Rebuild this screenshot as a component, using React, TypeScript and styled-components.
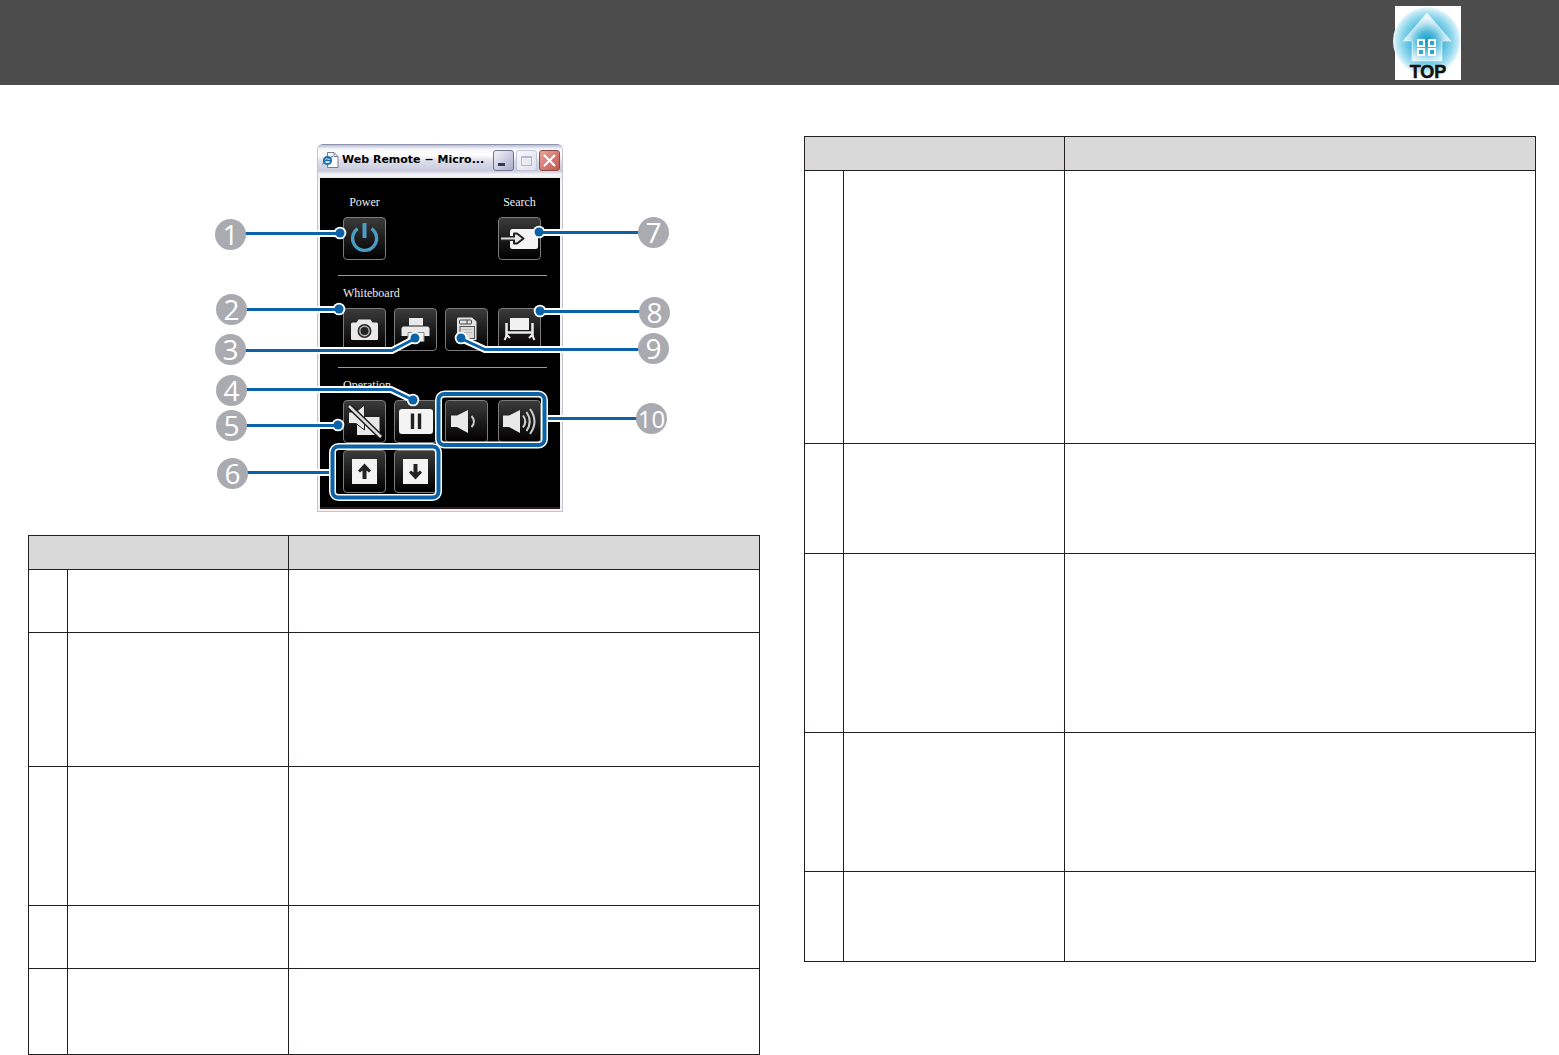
import React from 'react';
import styled, { createGlobalStyle } from 'styled-components';

const GlobalStyle = createGlobalStyle`
  *, *::before, *::after { box-sizing: border-box; }
  body {
    margin: 0;
    background: #fff;
    color: #231f20;
    font-family: "Liberation Sans", Arial, sans-serif;
  }
`;

const line = '#231f20';
const callout = '#0b62a6';

const TopBar = styled.header`
  display: flex;
  justify-content: flex-end;
  align-items: flex-start;
  height: 85px;
  padding: 6px 98px 0 0;
  background: #4c4c4c;
`;

const TopLink = styled.a`
  display: grid;
  width: 66px;
  height: 74px;
  background: #fff;
  color: #111;
  text-decoration: none;
  > * { grid-area: 1 / 1; }
`;

const TopText = styled.span`
  align-self: end;
  justify-self: center;
  font-size: 18px;
  line-height: 16px;
  font-weight: 700;
  -webkit-text-stroke: 0.5px #111;
`;

const HouseArt = styled.svg`
  display: block;
  overflow: visible;
`;

const Columns = styled.main`
  display: grid;
  grid-template-columns: 1fr 1fr;
  align-items: start;
  gap: 44px;
  padding: 0 23px 0 28px;
`;

const Column = styled.section<{ $top: number }>`
  padding-top: ${(p) => p.$top}px;
`;

const Table = styled.table`
  width: 100%;
  table-layout: fixed;
  border-collapse: separate;
  border-spacing: 0;
  border-top: 1px solid ${line};
  border-left: 1px solid ${line};
`;

const Col = styled.col<{ $width?: number }>`
  ${(p) => (p.$width ? `width: ${p.$width}px;` : '')}
`;

const Row = styled.tr<{ $height: number }>`
  height: ${(p) => p.$height}px;
`;

const HeadCell = styled.th`
  padding: 0;
  background: #d9d9d9;
  border-right: 1px solid ${line};
  border-bottom: 1px solid ${line};
`;

const Cell = styled.td`
  padding: 0;
  border-right: 1px solid ${line};
  border-bottom: 1px solid ${line};
`;

const Figure = styled.figure`
  position: relative;
  width: 455px;
  margin: 0 0 23px 187px;
  padding: 0 107px 0 102px;
`;

const Overlay = styled.svg`
  position: absolute;
  inset: 0;
  width: 100%;
  height: 100%;
  pointer-events: none;
`;

const Badge = styled.span<{ $x: number; $y: number; $wide: boolean }>`
  position: absolute;
  left: ${(p) => p.$x}px;
  top: ${(p) => p.$y}px;
  display: flex;
  align-items: center;
  justify-content: center;
  width: 31px;
  height: 31px;
  border-radius: 50%;
  background: #a9abb0;
  color: #fff;
  font-family: ${(p) => (p.$wide ? '"Liberation Sans Narrow", ' : '')}"Open Sans", sans-serif;
  font-size: ${(p) => (p.$wide ? 24 : 28)}px;
  line-height: 31px;
`;

const Window = styled.div`
  padding: 0 2px 2px;
  border: 1px solid #c4c4ca;
  border-top-color: #8d93ad;
  border-radius: 6px 6px 0 0;
  background: #f4f2f2;
`;

const TitleBar = styled.div`
  display: flex;
  align-items: center;
  gap: 3px;
  height: 33px;
  margin: 0 -2px;
  padding: 0 2px 3px 4px;
  border-radius: 5px 5px 0 0;
  background: linear-gradient(#b9bdd4 0, #f6f7fb 12%, #ffffff 30%, #dcdde9 50%, #c9cbdc 78%, #f6f6fa 90%, #e8e8ee 100%);
`;

const WindowTitle = styled.span`
  flex: 1;
  color: #000;
  font: 700 11px/16px "DejaVu Sans", sans-serif;
  white-space: nowrap;
`;

const WindowButtons = styled.div`
  display: flex;
  gap: 2px;
`;

const WindowButton = styled.button<{ $kind: 'min' | 'max' | 'close' }>`
  display: flex;
  width: 21px;
  height: 21px;
  padding: 0;
  border: 1px solid ${(p) => ({ min: '#6d7391', max: '#c3c6d6', close: '#8a4a4a' })[p.$kind]};
  border-radius: 3px;
  background: ${(p) =>
    ({
      min: 'linear-gradient(135deg, #f3f4fa, #a9adc8)',
      max: 'linear-gradient(135deg, #f8f8fc, #dfe0eb)',
      close: 'linear-gradient(135deg, #e9a49a, #c0574e)',
    })[p.$kind]};
`;

const Screen = styled.div`
  padding: 0 13px 0 18px;
  background: #000;
  border-bottom: 2px solid #2c1a1c;
  color: #eee;
`;

const Group = styled.div<{ $top: number; $bottom: number }>`
  display: flex;
  flex-direction: column;
  gap: 8px;
  padding: ${(p) => p.$top}px 6px ${(p) => p.$bottom}px 5px;
  & + & { border-top: 1px solid #9a9a9a; }
`;

const Label = styled.span`
  font: 12px/14px "Liberation Serif", "Times New Roman", serif;
`;

const Spread = styled.div`
  display: flex;
  justify-content: space-between;
`;

const Labelled = styled.label`
  display: flex;
  flex-direction: column;
  align-items: center;
  gap: 8px;
  width: 43px;
`;

const KeyGrid = styled.div`
  display: grid;
  grid-template-columns: 43px 43px 45px 43px;
  gap: 7px 8px;
`;

const Key = styled.button`
  display: block;
  width: 43px;
  height: 43px;
  padding: 0;
  border: 1px solid #7c7c7c;
  border-radius: 4px;
  background: linear-gradient(#3b3b3b, #1c1c1c 50%, #000);
`;

const KeyArt = styled.svg`
  display: block;
  margin: -1px;
`;

type IconName =
  | 'power' | 'search' | 'camera' | 'print' | 'save' | 'board'
  | 'mute' | 'pause' | 'volDown' | 'volUp' | 'pageUp' | 'pageDown';

const light = '#e9e9e9';

const icons: Record<IconName, React.ReactNode> = {
  power: (
    <g fill="none" stroke="#4a9cc4" strokeWidth="3.4">
      <path d="M14.6 11.6a12 12 0 1 0 14 0" />
      <path d="M21.5 6v15" strokeWidth="4" />
    </g>
  ),
  search: (
    <>
      <rect x="12" y="12" width="28" height="20" rx="2.5" fill="#f4f4f4" />
      <path d="M3 20H16V16.500H19L25.500 21.500L19 26.500H16V23H3Z" fill="#e8e8e8" stroke="#222" strokeWidth="2" strokeLinejoin="round" />
      <path d="M3 21.500H17" stroke="#ddd" strokeWidth="2" />
    </>
  ),
  camera: (
    <>
      <path d="M9.500 14.500H13.500L15.500 11.500H27.500L29.500 14.500H33.500Q35 14.500 35 16V31Q35 32 34 32H9.500Q8 32 8 31V16Q8 14.500 9.500 14.500Z" fill={light} />
      <circle cx="21.500" cy="23" r="7" fill="#2a2a2a" />
      <circle cx="21.500" cy="23" r="5.400" fill="#bbb" />
      <circle cx="21.500" cy="23" r="4" fill="#222" />
    </>
  ),
  print: (
    <>
      <path d="M15 10H29V17.500H15Z" fill={light} />
      <path d="M9 18.500H34L35.500 20V28H7.500V20Z" fill={light} />
      <path d="M14 24.500H30V33.500H14Z" fill="#eee" stroke="#888" />
    </>
  ),
  save: (
    <>
      <path d="M13.500 9.500H27L31.500 13.500V32H13.500Q12 32 12 30.500V11Q12 9.500 13.500 9.500Z" fill="#e2e2e2" />
      <rect x="14.500" y="12" width="12" height="4" rx="1" fill="none" stroke="#444" />
      <path d="M22 12V16" stroke="#444" />
      <rect x="15" y="18.500" width="14.500" height="12" fill="#dcdcdc" stroke="#555" />
      <path d="M17 21.500H27M17 24.500H27" stroke="#bbb" />
    </>
  ),
  board: (
    <>
      <rect x="12" y="10" width="19" height="12" fill="#f1f1f1" />
      <path d="M8.500 15V29M34.500 15V29M8 24.500H35" stroke={light} strokeWidth="2.500" />
      <path d="M9 27L6.500 32M9 27L12 30M34 27L36.500 32M34 27L31 30" stroke={light} strokeWidth="2" />
    </>
  ),
  mute: (
    <>
      <path d="M14 17H36.500V35H14Z" fill={light} />
      <path d="M5.500 12H13L21.500 5V30L13 23.500H5.500Z" fill={light} stroke="#222" />
      <path d="M6 6L38 37" stroke="#1b1b1b" strokeWidth="5.500" />
      <path d="M6 6L38 37" stroke="#ddd" strokeWidth="2.500" />
    </>
  ),
  pause: (
    <>
      <rect x="5" y="9" width="34" height="25" rx="3" fill="#f4f4f4" />
      <path d="M18.500 13.500V29M25.500 13.500V29" stroke="#222" strokeWidth="3.400" />
    </>
  ),
  volDown: (
    <>
      <path d="M6 15.500H12L23 10V33L12 27H6Z" fill={light} />
      <path d="M26.500 16Q31.500 21.500 26.500 27" fill="none" stroke="#ccc" strokeWidth="2" />
    </>
  ),
  volUp: (
    <>
      <path d="M5 15.500H11L22 10V33L11 27H5Z" fill={light} />
      <path d="M25 15.500Q29.500 21.500 25 27.500M28.500 12Q35 21.500 28.500 31M32 9Q41 21.500 32 34" fill="none" stroke="#ccc" strokeWidth="2" />
    </>
  ),
  pageUp: (
    <>
      <rect x="9" y="9" width="25" height="25" fill="#f4f4f4" />
      <path d="M21.500 13.500L28 20.500L26 22.500L23.500 20.500V29H19.500V20.500L17 22.500L15 20.500Z" fill="#222" />
    </>
  ),
  pageDown: (
    <>
      <rect x="9" y="9" width="25" height="25" fill="#f4f4f4" />
      <path d="M21.500 29.500L28 22.500L26 20.500L23.500 22.500V14H19.500V22.500L17 20.500L15 22.500Z" fill="#222" />
    </>
  ),
};

const RemoteKey = ({ icon, id }: { icon: IconName; id?: string }) => (
  <Key type="button" id={id} aria-label={icon}>
    <KeyArt width="43" height="43" viewBox="0 0 43 43" aria-hidden="true">
      {icons[icon]}
    </KeyArt>
  </Key>
);

const badges = [
  { n: 1, x: 0, y: 75 },
  { n: 2, x: 1, y: 150 },
  { n: 3, x: 0, y: 190 },
  { n: 4, x: 1, y: 231 },
  { n: 5, x: 1, y: 266 },
  { n: 6, x: 2, y: 314 },
  { n: 7, x: 423, y: 73 },
  { n: 8, x: 424, y: 153 },
  { n: 9, x: 423, y: 189 },
  { n: 10, x: 421, y: 259 },
];

const leaders = [
  'M245 233.500H340',
  'M245 309.500H339',
  'M245 350.500H392L415 338.500',
  'M245 389.500H391L413 400',
  'M245 425.500H338',
  'M247 472.500H329',
  'M640 232.500H539',
  'M640 311.500H540',
  'M640 349.500H485L461 338.500',
  'M637 418.500H548',
];

const dots = [
  [340, 233], [339, 309], [415, 338], [413, 400],
  [338, 425], [539, 232], [540, 311], [461, 338],
];

const Leaders = () => (
  <Overlay viewBox="215 144 455 368" aria-hidden="true">
    <g fill="none" stroke="#fff" strokeWidth="7">
      {leaders.map((d) => <path key={d} d={d} />)}
      <rect x="332.500" y="446.500" width="106" height="51" rx="6" />
      <rect x="438.500" y="394" width="106" height="51" rx="6" />
    </g>
    {dots.map(([x, y]) => <circle key={`${x}-${y}`} cx={x} cy={y} r="6.300" fill="#fff" />)}
    <g fill="none" stroke={callout} strokeWidth="3">
      {leaders.map((d) => <path key={d} d={d} />)}
      <rect x="332.500" y="446.500" width="106" height="51" rx="6" strokeWidth="4" />
      <rect x="438.500" y="394" width="106" height="51" rx="6" strokeWidth="4" />
    </g>
    {dots.map(([x, y]) => <circle key={`${x}-${y}`} cx={x} cy={y} r="4.500" fill={callout} />)}
  </Overlay>
);

const PageIcon = () => (
  <svg width="17" height="18" viewBox="0 0 17 18" aria-hidden="true">
    <path d="M5.500 1.500H12L16 5.500V16.500H5.500Z" fill="#fff" stroke="#777c90" />
    <path d="M12 1.500V5.500H16" fill="none" stroke="#777c90" />
    <circle cx="5.500" cy="9.500" r="3.600" fill="#e5f3fc" stroke="#1d6fae" strokeWidth="2" />
    <path d="M2 9.500H9" stroke="#1d6fae" strokeWidth="1.500" />
    <path d="M0.500 13.500Q4 7 11 5.500" fill="none" stroke="#1d6fae" />
  </svg>
);

const House = () => (
  <HouseArt width="66" height="74" viewBox="0 0 66 74" aria-hidden="true">
    <defs>
      <radialGradient id="glow">
        <stop offset="0" stopColor="#0b9dc9" />
        <stop offset="0.450" stopColor="#45b8dc" />
        <stop offset="0.750" stopColor="#8fd7ed" />
        <stop offset="0.920" stopColor="#c9ecf6" />
        <stop offset="1" stopColor="#f2fbfd" />
      </radialGradient>
      <radialGradient id="wall" gradientUnits="userSpaceOnUse" cx="32" cy="35" r="26">
        <stop offset="0" stopColor="#0f9cc8" />
        <stop offset="0.350" stopColor="#4fb9da" />
        <stop offset="0.700" stopColor="#c4e8f4" />
        <stop offset="1" stopColor="#fff" />
      </radialGradient>
    </defs>
    <circle cx="32" cy="35" r="34" fill="url(#glow)" />
    <path d="M32 7L56 35H47V55H17V35H8Z" fill="url(#wall)" stroke="#e9f7fb" strokeOpacity="0.600" />
    <g fill="#2aa5cf" stroke="#fff" strokeWidth="2">
      <rect x="23" y="34" width="6" height="6" />
      <rect x="34" y="34" width="6" height="6" />
      <rect x="23" y="43" width="6" height="6" />
      <rect x="34" y="43" width="6" height="6" />
    </g>
  </HouseArt>
);

const WebRemote = () => (
  <Window>
    <TitleBar>
      <PageIcon />
      <WindowTitle>Web Remote − Micro...</WindowTitle>
      <WindowButtons>
        <WindowButton type="button" $kind="min" aria-label="Minimize">
          <svg width="19" height="19" aria-hidden="true"><path d="M4 13.500H11" stroke="#333a5c" strokeWidth="3" /></svg>
        </WindowButton>
        <WindowButton type="button" $kind="max" aria-label="Maximize">
          <svg width="19" height="19" aria-hidden="true"><path d="M4.500 5.500H14.500V14.500H4.500ZM4 6.500H15" fill="none" stroke="#b4b8cd" /></svg>
        </WindowButton>
        <WindowButton type="button" $kind="close" aria-label="Close">
          <svg width="19" height="19" aria-hidden="true"><path d="M4 4L15 15M15 4L4 15" stroke="#fff" strokeWidth="2" /></svg>
        </WindowButton>
      </WindowButtons>
    </TitleBar>
    <Screen>
      <Group $top={17} $bottom={15}>
        <Spread>
          <Labelled htmlFor="power"><Label>Power</Label><RemoteKey icon="power" id="power" /></Labelled>
          <Labelled htmlFor="search"><Label>Search</Label><RemoteKey icon="search" id="search" /></Labelled>
        </Spread>
      </Group>
      <Group $top={10} $bottom={16}>
        <Label>Whiteboard</Label>
        <KeyGrid>
          {(['camera', 'print', 'save', 'board'] as IconName[]).map((i) => <RemoteKey key={i} icon={i} />)}
        </KeyGrid>
      </Group>
      <Group $top={10} $bottom={14}>
        <Label>Operation</Label>
        <KeyGrid>
          {(['mute', 'pause', 'volDown', 'volUp', 'pageUp', 'pageDown'] as IconName[]).map((i) => <RemoteKey key={i} icon={i} />)}
        </KeyGrid>
      </Group>
    </Screen>
  </Window>
);

const ControlsTable = ({ rows }: { rows: number[] }) => (
  <Table>
    <colgroup>
      <Col $width={39} />
      <Col $width={221} />
      <Col />
    </colgroup>
    <thead>
      <Row $height={34}>
        <HeadCell colSpan={2} />
        <HeadCell />
      </Row>
    </thead>
    <tbody>
      {rows.map((height, i) => (
        <Row key={i} $height={height}>
          <Cell />
          <Cell />
          <Cell />
        </Row>
      ))}
    </tbody>
  </Table>
);

export default function App() {
  return (
    <>
      <GlobalStyle />
      <TopBar>
        <TopLink href="#top">
          <House />
          <TopText>TOP</TopText>
        </TopLink>
      </TopBar>
      <Columns>
        <Column $top={59}>
          <Figure>
            <WebRemote />
            <Leaders />
            {badges.map((b) => (
              <Badge key={b.n} $x={b.x} $y={b.y} $wide={b.n > 9}>{b.n}</Badge>
            ))}
          </Figure>
          <ControlsTable rows={[63, 134, 139, 63, 86]} />
        </Column>
        <Column $top={51}>
          <ControlsTable rows={[273, 110, 179, 139, 90]} />
        </Column>
      </Columns>
    </>
  );
}
